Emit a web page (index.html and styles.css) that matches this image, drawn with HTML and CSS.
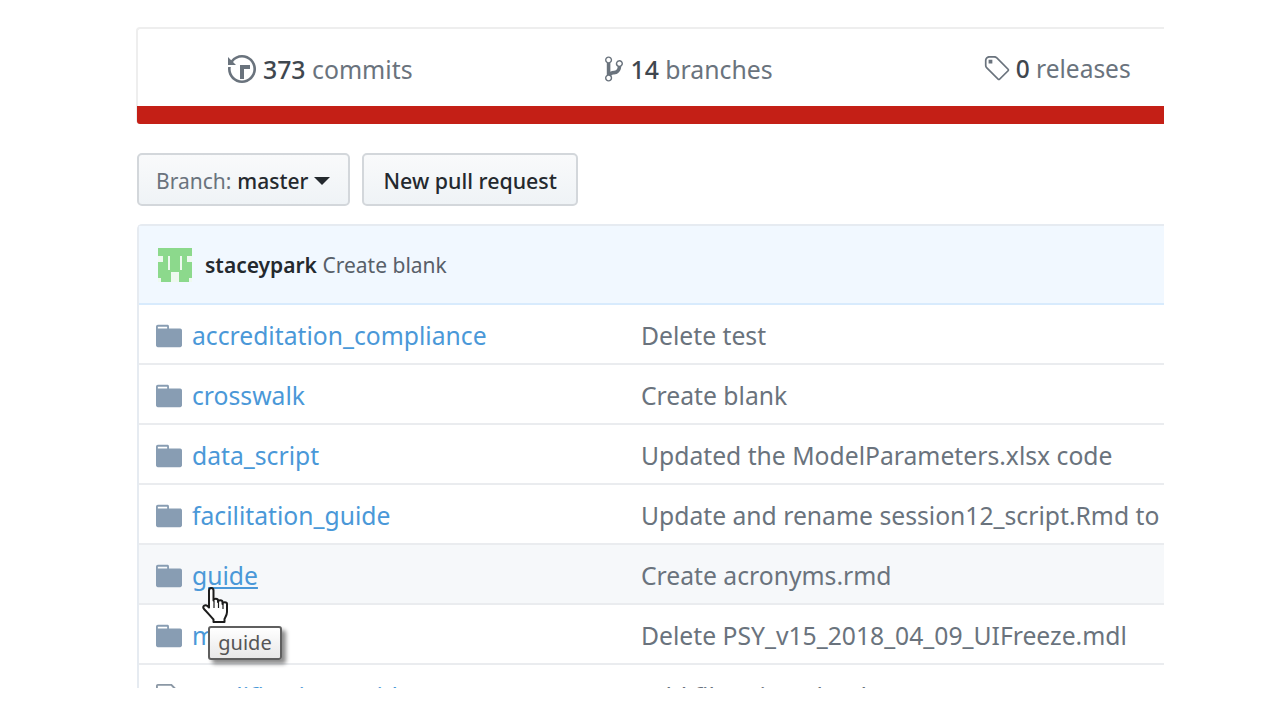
FILE: index.html
```html
<!DOCTYPE html>
<html lang="en">
<head>
<meta charset="utf-8">
<title>Repository</title>
<link rel="stylesheet" href="styles.css">
</head>
<body>
<main class="page">
  <section class="stats-card">
    <ul class="stats">
      <li class="stat stat-commits">
        <svg class="stat-icon" width="28" height="32" viewBox="0 0 14 16"><path d="M8 13H6V6h5v2H8v5zM7 1C4.81 1 2.87 2.02 1.59 3.59L0 2v4h4L2.5 4.5C3.55 3.17 5.17 2.3 7 2.3c3.14 0 5.7 2.56 5.7 5.7s-2.56 5.7-5.7 5.7A5.71 5.71 0 0 1 1.3 8c0-.34.03-.67.09-1H.08C.03 7.33 0 7.66 0 8c0 3.86 3.14 7 7 7s7-3.14 7-7-3.14-7-7-7z"/></svg>
        <span><b>373</b> commits</span>
      </li>
      <li class="stat stat-branches">
        <svg class="stat-icon" width="18" height="30" viewBox="0 0 10 16"><path d="M10 5c0-1.11-.89-2-2-2a1.993 1.993 0 0 0-1 3.72v.3c-.02.52-.23.98-.63 1.38-.4.4-.86.61-1.38.63-.83.02-1.48.16-2 .45V4.72a1.993 1.993 0 0 0 1-1.72C4 1.89 3.11 1 2 1 .88 1 0 1.89 0 3a2 2 0 0 0 1 1.72v6.56c-.59.35-1 .99-1 1.72 0 1.11.89 2 2 2 1.11 0 2-.89 2-2 0-.53-.2-1-.53-1.36.09-.06.48-.41.59-.47.25-.11.56-.17.94-.17 1.05-.05 1.95-.45 2.75-1.25S8.95 7.77 9 6.73h-.02C9.59 6.37 10 5.73 10 5zM2 1.8c.66 0 1.2.55 1.2 1.2 0 .65-.55 1.2-1.2 1.2C1.35 4.2.8 3.65.8 3c0-.65.55-1.2 1.2-1.2zm0 12.41c-.66 0-1.2-.55-1.2-1.2 0-.65.55-1.2 1.2-1.2.65 0 1.2.55 1.2 1.2 0 .65-.55 1.2-1.2 1.2zm6-8c-.66 0-1.2-.55-1.2-1.2 0-.65.55-1.2 1.2-1.2.65 0 1.2.55 1.2 1.2 0 .65-.55 1.2-1.2 1.2z"/></svg>
        <span><b>14</b> branches</span>
      </li>
      <li class="stat stat-releases">
        <svg class="stat-icon" width="28" height="30" viewBox="0 0 15 16"><path d="M7.73 1.73C7.26 1.26 6.62 1 5.96 1H3.5C2.13 1 1 2.13 1 3.5v2.47c0 .66.27 1.3.73 1.77l6.06 6.06c.39.39 1.02.39 1.41 0l4.59-4.59a.996.996 0 0 0 0-1.41L7.73 1.73zM2.38 7.09c-.31-.3-.47-.7-.47-1.13V3.5c0-.88.72-1.59 1.59-1.59h2.47c.42 0 .83.16 1.13.47l6.14 6.13-4.73 4.73-6.13-6.15zM3.01 3h2v2H3V3h.01z"/></svg>
        <span><b>0</b> releases</span>
      </li>
    </ul>
    <div class="lang-bar"></div>
  </section>

  <div class="toolbar">
    <button class="btn btn-branch">Branch: <b>master</b><i class="caret"></i></button>
    <button class="btn">New pull request</button>
  </div>

  <section class="files">
    <div class="commit">
      <svg class="avatar" width="34" height="34" viewBox="0 0 34 34"><rect width="34" height="34" fill="#8cd98c"/><path fill="#eef9ef" d="M0 8h5v6H0zM29 8h5v6h-5zM10 8h2v14h-2zM22 8h2v14h-2zM13 24h8v10h-8zM0 30h3v4H0zM31 30h3v4h-3z"/></svg>
      <span class="commit-text"><b>staceypark</b> Create blank</span>
    </div>
    <div class="row"><svg class="folder" width="26" height="30" viewBox="0 0 14 16"><path d="M13 4H7V3c0-.66-.31-1-1-1H1c-.55 0-1 .45-1 1v10c0 .55.45 1 1 1h12c.55 0 1-.45 1-1V5c0-.55-.45-1-1-1zM6 4H1V3h5v1z"/></svg><a class="name">accreditation_compliance</a><span class="msg">Delete test</span></div>
    <div class="row"><svg class="folder" width="26" height="30" viewBox="0 0 14 16"><path d="M13 4H7V3c0-.66-.31-1-1-1H1c-.55 0-1 .45-1 1v10c0 .55.45 1 1 1h12c.55 0 1-.45 1-1V5c0-.55-.45-1-1-1zM6 4H1V3h5v1z"/></svg><a class="name">crosswalk</a><span class="msg">Create blank</span></div>
    <div class="row"><svg class="folder" width="26" height="30" viewBox="0 0 14 16"><path d="M13 4H7V3c0-.66-.31-1-1-1H1c-.55 0-1 .45-1 1v10c0 .55.45 1 1 1h12c.55 0 1-.45 1-1V5c0-.55-.45-1-1-1zM6 4H1V3h5v1z"/></svg><a class="name">data_script</a><span class="msg">Updated the ModelParameters.xlsx code</span></div>
    <div class="row"><svg class="folder" width="26" height="30" viewBox="0 0 14 16"><path d="M13 4H7V3c0-.66-.31-1-1-1H1c-.55 0-1 .45-1 1v10c0 .55.45 1 1 1h12c.55 0 1-.45 1-1V5c0-.55-.45-1-1-1zM6 4H1V3h5v1z"/></svg><a class="name">facilitation_guide</a><span class="msg">Update and rename session12_script.Rmd to</span></div>
    <div class="row row-hover"><svg class="folder" width="26" height="30" viewBox="0 0 14 16"><path d="M13 4H7V3c0-.66-.31-1-1-1H1c-.55 0-1 .45-1 1v10c0 .55.45 1 1 1h12c.55 0 1-.45 1-1V5c0-.55-.45-1-1-1zM6 4H1V3h5v1z"/></svg><a class="name name-hover">guide</a><span class="msg">Create acronyms.rmd</span></div>
    <div class="row"><svg class="folder" width="26" height="30" viewBox="0 0 14 16"><path d="M13 4H7V3c0-.66-.31-1-1-1H1c-.55 0-1 .45-1 1v10c0 .55.45 1 1 1h12c.55 0 1-.45 1-1V5c0-.55-.45-1-1-1zM6 4H1V3h5v1z"/></svg><a class="name">m</a><span class="msg">Delete PSY_v15_2018_04_09_UIFreeze.mdl</span></div>
    <div class="row row-last"><svg class="file" width="26" height="30" viewBox="0 0 14 16"><path d="M8.500 1H1c-.55 0-1 .45-1 1v12c0 .55.45 1 1 1h10c.55 0 1-.45 1-1V4.500L8.500 1zM11 14H1V2h7l3 3v9z"/></svg><a class="name">qualification_guide</a><span class="msg">Add files via upload</span></div>
  </section>

  <div class="tooltip">guide</div>
  <svg class="hand" width="30" height="39" viewBox="0 0 30 39"><path fill="#fff" stroke="#1c1c1c" stroke-width="2" stroke-linejoin="round" d="M7 4.500c0-3.500 4.500-3.500 4.500 0v10c0-2.500 4.500-2.500 4.500 0v1.500c0-2.500 4.500-2.500 4.500 0v2c0-2.500 4.500-2.500 4.500 0v8c0 3-1.500 5-2.500 7v3H11.500v-2.500C9 31 5 26 2 23c-2-2.500 1-5 3.500-3L7 21.500z"/><path stroke="#1c1c1c" stroke-width="1.200" d="M12 15v7M16.500 16v6M21 18v5"/></svg>
</main>
</body>
</html>
```
FILE: styles.css
```css
* { box-sizing: border-box; }
html, body { margin: 0; padding: 0; background: #fff; }
body { font-family: "Noto Sans", "Open Sans", sans-serif; color: #586069; height: 720px; overflow: hidden; }
b { font-weight: 600; }

.page {
  position: relative;
  width: 1028px;
  height: 688px;
  margin-left: 136px;
  padding-top: 27px;
  overflow: hidden;
}

.stats-card {
  border: 2px solid #eeeeee;
  border-right: 0;
  border-bottom: 0;
  border-radius: 4px 0 0 4px;
}
.stats {
  display: flex;
  align-items: center;
  height: 77px;
  margin: 0;
  padding: 2px 0 0 90px;
  list-style: none;
  font-size: 24.800px;
  color: #6a737d;
}
.stat { display: flex; align-items: center; gap: 7px; white-space: nowrap; }
.stat b { font-weight: 500; color: #3f474f; }
.stat-icon { fill: #6a737d; }
.stat-branches { margin-left: 192px; gap: 8px; }
.stat-releases { margin-left: 210px; gap: 5px; font-size: 24.500px; }
.lang-bar { height: 18px; margin-left: -1px; background: #c41f16; border-radius: 0 0 0 3px; }

.toolbar { display: flex; gap: 12px; margin: 29px 0 0 1px; }
.btn {
  height: 53px;
  padding: 2px 19px 0;
  border: 2px solid #d3d7db;
  border-radius: 5px;
  background: linear-gradient(#f9fafb, #eff3f6);
  font: 500 21.400px "Noto Sans", "Open Sans", sans-serif;
  color: #24292e;
  white-space: nowrap;
}
.btn-branch { font-size: 21px; color: #6a737d; font-weight: 400; display: flex; align-items: center; gap: 6px; padding: 2px 18px 0 17px; }
.btn-branch b { color: #24292e; font-weight: 500; }
.caret { width: 0; height: 0; border: 8px solid transparent; border-top-color: #24292e; border-bottom: 0; }

.files {
  margin: 18px 0 0 1px;
  border: 2px solid #e6ebf1;
  border-right: 0;
  border-bottom: 0;
  border-radius: 5px 0 0 0;
}
.commit {
  display: flex;
  align-items: center;
  gap: 13px;
  height: 79px;
  padding-left: 19px;
  background: #f1f8ff;
  border-bottom: 2px solid #d8ebfd;
  font-size: 21px;
  color: #586069;
}
.commit-text b { color: #24292e; }
.row {
  display: flex;
  align-items: center;
  gap: 10px;
  height: 60px;
  padding: 2px 0 0 17px;
  border-bottom: 2px solid #eaecef;
  font-size: 24.700px;
  white-space: nowrap;
}
.row-last { padding-top: 4px; }
.row-hover { background: #f6f8fa; }
.folder { flex: none; fill: #889db3; margin-top: 2px; }
.file { flex: none; fill: #8b98a5; margin-top: 2px; }
.name { flex: none; width: 439px; color: #4a98d8; }
.name-hover { text-decoration: underline; }
.msg { color: #6a737d; }

.tooltip {
  position: absolute;
  left: 72px;
  top: 626px;
  width: 74px;
  height: 34px;
  border: 2px solid #5f5f5f;
  border-radius: 3px;
  background: linear-gradient(#ffffff, #e8e8e8);
  box-shadow: 4px 4px 4px rgba(0, 0, 0, .45);
  font-size: 20px;
  line-height: 29px;
  text-align: center;
  color: #555;
}
.hand { position: absolute; left: 66px; top: 586px; }
```
